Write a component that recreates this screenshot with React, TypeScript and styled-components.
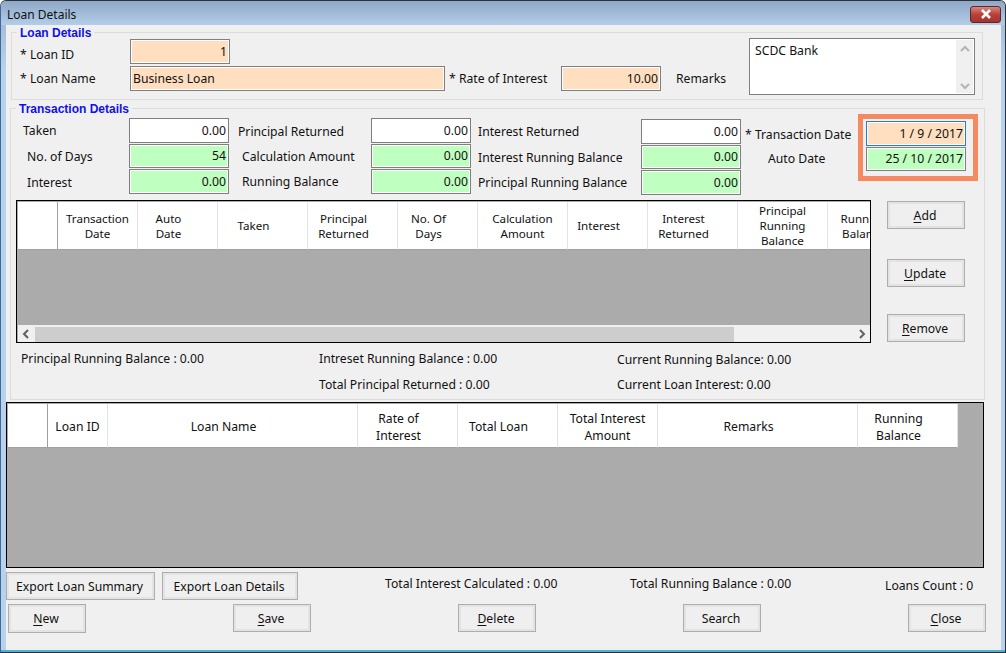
import React from "react";
import styled, { createGlobalStyle, css } from "styled-components";

const GlobalStyle = createGlobalStyle`
  html, body {
    margin: 0;
    padding: 0;
    background: #fff;
  }
  body {
    font-family: "Noto Sans", "Open Sans", sans-serif;
    font-size: 12.2px;
    color: #111;
  }
`;

const placed = css<{ $row?: number; $col?: number }>`
  ${(p) => p.$row && `grid-row: ${p.$row};`}
  ${(p) => p.$col && `grid-column: ${p.$col};`}
`;

const Window = styled.div`
  width: 1006px;
  height: 653px;
  box-sizing: border-box;
  display: flex;
  flex-direction: column;
  overflow: hidden;
  border: 1px solid #2b3138;
  border-left-color: #3c6a9c;
  border-radius: 6px 6px 0 0;
  background: linear-gradient(#9db5d2, #b9d1ea 70px);
`;

const TitleBar = styled.div`
  height: 24px;
  flex: none;
  display: flex;
  align-items: center;
  justify-content: space-between;
  padding: 0 4px 0 6px;
  background: linear-gradient(#8ea8c6, #b3cde9);
`;

const Title = styled.span`
  margin-top: 3px;
  font-size: 12px;
  color: #111;
`;

const CloseX = styled.div`
  width: 31px;
  height: 17px;
  margin-top: 2px;
  box-sizing: border-box;
  display: flex;
  align-items: center;
  justify-content: center;
  border: 1px solid #5a2a28;
  border-radius: 3px;
  background: linear-gradient(#d8877d, #b8423a 50%, #a8322c);
`;

const Client = styled.div`
  flex: 1;
  margin: 0 4px 0 5px;
  display: flex;
  flex-direction: column;
  align-items: flex-start;
  background: #f0f0f0;
`;

const BottomEdge = styled.div`
  height: 2px;
  flex: none;
  background: #4fb0d4;
`;

const Group = styled.fieldset<{ $left: number; $width: number }>`
  box-sizing: border-box;
  min-width: 0;
  margin: 0 0 0 ${(p) => p.$left}px;
  width: ${(p) => p.$width}px;
  padding: 0;
  border: 1px solid #dcdcdc;
`;

const GroupTitle = styled.legend`
  margin-left: 5px;
  padding: 0 3px;
  line-height: 14px;
  font-family: "Liberation Sans", Arial, sans-serif;
  font-size: 12px;
  font-weight: 700;
  color: #0f0fee;
  transform: translateY(1px);
`;

const LoanGrid = styled.div`
  display: grid;
  grid-template-columns: 118px 315px 116px 100px 88px 226px;
  grid-template-rows: 25px 25px;
  row-gap: 2px;
  padding: 0 0 8px 0;
  align-items: center;
`;

const Label = styled.span<{ $indent?: number; $drop?: number; $row?: number; $col?: number }>`
  ${placed}
  padding-left: ${(p) => p.$indent ?? 0}px;
  padding-top: ${(p) => p.$drop ?? 0}px;
  white-space: nowrap;
`;

const Field = styled.div<{
  $tone?: "peach" | "green" | "white";
  $focus?: boolean;
  $width?: number;
  $row?: number;
  $col?: number;
  $start?: boolean;
  $low?: boolean;
}>`
  ${placed}
  box-sizing: border-box;
  height: 100%;
  ${(p) => p.$width && `width: ${p.$width}px;`}
  display: flex;
  align-items: center;
  justify-content: ${(p) => (p.$start ? "flex-start" : "flex-end")};
  padding: 0 2px ${(p) => (p.$low ? 0 : 1)}px 2px;
  border: 1px solid ${(p) => (p.$focus ? "#1d7fd0" : "#7f7f7f")};
  box-shadow: inset 0 0 0 1px #fff;
  background: ${(p) =>
    p.$tone === "green" ? "#bfffbf" : p.$tone === "white" ? "#fff" : "#ffdfc0"};
  white-space: nowrap;
`;

const RemarksBox = styled.div`
  grid-column: 6;
  grid-row: 1 / 3;
  align-self: start;
  box-sizing: border-box;
  height: 57px;
  margin-top: -1px;
  display: flex;
  justify-content: space-between;
  border: 1px solid #7f7f7f;
  background: #fff;
  padding-left: 5px;
  line-height: 24px;
`;

const MiniScroll = styled.div`
  width: 17px;
  margin: 1px;
  display: flex;
  flex-direction: column;
  justify-content: space-between;
  align-items: center;
  padding: 5px 0 3px;
  background: #f0f0f0;
`;

const TxGroup = styled(Group)`
  margin-top: 1px;
`;

const TxTop = styled.div`
  display: flex;
  align-items: flex-start;
  padding-top: 3px;
`;

const FieldColumn = styled.div<{ $labels: number; $drop?: number }>`
  display: grid;
  grid-template-columns: ${(p) => p.$labels}px 100px;
  grid-template-rows: 25px 24px 25px;
  row-gap: 1px;
  align-items: center;
  margin-top: ${(p) => p.$drop ?? 0}px;
`;

const DateLabels = styled.div`
  width: 117px;
  margin-top: 4px;
  display: grid;
  grid-template-rows: 24px 24px;
  align-items: center;
`;

const DateHighlight = styled.div`
  margin-top: -4px;
  box-sizing: border-box;
  width: 120px;
  height: 67px;
  padding: 2px 7px 0 3px;
  border: 5px solid #f58a61;
  display: grid;
  grid-template-rows: 25px 24px;
  row-gap: 1px;
`;

const DataGrid = styled.div<{ $width: number; $height: number }>`
  box-sizing: border-box;
  width: ${(p) => p.$width}px;
  height: ${(p) => p.$height}px;
  flex: none;
  display: flex;
  flex-direction: column;
  border: 1px solid #000;
  padding-top: 1px;
  background: #ababab;
  overflow: hidden;
`;

const HeaderRow = styled.div<{ $height: number; $size: number; $leading: number }>`
  flex: none;
  height: ${(p) => p.$height}px;
  display: flex;
  margin-left: 1px;
  overflow: hidden;
  font-size: ${(p) => p.$size}px;
  line-height: ${(p) => p.$leading}px;
`;

const HeaderCell = styled.div<{ $width: number; $marker?: boolean; $shift?: boolean; $down: number }>`
  box-sizing: border-box;
  flex: none;
  width: ${(p) => p.$width}px;
  padding: ${(p) => p.$down}px ${(p) => (p.$shift ? 18 : 0)}px 0 0;
  display: flex;
  align-items: center;
  justify-content: center;
  text-align: center;
  background: #fff;
  border-right: 1px solid ${(p) => (p.$marker ? "#a0a0a0" : "#e3e3e3")};
  border-bottom: 1px solid #a0a0a0;
`;

const GridBody = styled.div`
  flex: 1;
  background: #ababab;
`;

const HScroll = styled.div`
  flex: none;
  height: 16px;
  display: flex;
  align-items: center;
  margin-left: 1px;
  border-top: 1px solid #f0f0f0;
  background: #f0f0f0;
`;

const ScrollButton = styled.div`
  width: 17px;
  height: 16px;
  flex: none;
  display: flex;
  align-items: center;
  justify-content: center;
`;

const ScrollThumb = styled.div`
  width: 699px;
  height: 15px;
  flex: none;
  background: #cdcdcd;
`;

const ScrollTrack = styled.div`
  flex: 1;
`;

const TxMiddle = styled.div`
  display: flex;
  margin: 5px 0 0 5px;
`;

const SideButtons = styled.div`
  display: flex;
  flex-direction: column;
  margin: 1px 0 0 16px;
`;

const Button = styled.button<{ $width?: number; $top?: number; $left?: number; $tall?: boolean }>`
  box-sizing: border-box;
  width: ${(p) => p.$width ?? 78}px;
  height: ${(p) => (p.$tall ? 29 : 28)}px;
  flex: none;
  margin: ${(p) => p.$top ?? 0}px 0 0 ${(p) => p.$left ?? 0}px;
  padding: 0 2px 0 0;
  font: inherit;
  color: #111;
  background: #efefef;
  border: 1px solid #adadad;
  box-shadow: inset 0 0 0 2px #e3e3e3;

  u {
    text-underline-offset: 2px;
  }
`;

const Summary = styled.div`
  display: grid;
  grid-template-columns: 298px 298px 298px;
  grid-auto-rows: 14px;
  row-gap: 12px;
  margin: 9px 0 7px 10px;
  line-height: 14px;
`;

const SummaryDrop = styled.span`
  padding-top: 1px;
`;

const MainGrid = styled(DataGrid)`
  margin: 2px 0 0 0;
`;

const FooterInfo = styled.div`
  display: flex;
  align-items: center;
  margin: 4px 0 0 0;
`;

const InfoText = styled.span<{ $width: number; $drop?: number; $left?: number }>`
  flex: none;
  width: ${(p) => p.$width}px;
  white-space: nowrap;
  padding-top: ${(p) => p.$drop ?? 0}px;
  margin: -6px 0 0 ${(p) => p.$left ?? 0}px;
`;

const FooterButtons = styled.div`
  display: flex;
  align-items: flex-start;
  gap: 147px;
  margin: 4px 0 0 2px;
`;

type Column = { width: number; lines?: string[]; marker?: boolean; shift?: boolean };

const txColumns: Column[] = [
  { width: 40, marker: true },
  { width: 80, lines: ["Transaction", "Date"] },
  { width: 80, lines: ["Auto", "Date"], shift: true },
  { width: 90, lines: ["Taken"], shift: true },
  { width: 90, lines: ["Principal", "Returned"], shift: true },
  { width: 80, lines: ["No. Of", "Days"], shift: true },
  { width: 90, lines: ["Calculation", "Amount"] },
  { width: 80, lines: ["Interest"], shift: true },
  { width: 90, lines: ["Interest", "Returned"], shift: true },
  { width: 90, lines: ["Principal", "Running", "Balance"] },
  { width: 90, lines: ["Running", "Balance"], shift: true },
];

const loanColumns: Column[] = [
  { width: 40, marker: true },
  { width: 60, lines: ["Loan ID"] },
  { width: 250, lines: ["Loan Name"], shift: true },
  { width: 100, lines: ["Rate of", "Interest"], shift: true },
  { width: 100, lines: ["Total Loan"], shift: true },
  { width: 100, lines: ["Total Interest", "Amount"] },
  { width: 200, lines: ["Remarks"], shift: true },
  { width: 100, lines: ["Running", "Balance"], shift: true },
];

const Header = ({ columns, height, size, leading, down = 0 }: { columns: Column[]; height: number; size: number; leading: number; down?: number }) => (
  <HeaderRow $height={height} $size={size} $leading={leading}>
    {columns.map((col, i) => (
      <HeaderCell key={i} $width={col.width} $marker={col.marker} $shift={col.shift} $down={down}>
        <div>
          {(col.lines || []).map((line) => (
            <div key={line}>{line}</div>
          ))}
        </div>
      </HeaderCell>
    ))}
  </HeaderRow>
);

const Chevron = ({ dir, color = "#606060" }: { dir: "up" | "down" | "left" | "right"; color?: string }) => {
  const paths = {
    up: "M1 6 L5 2 L9 6",
    down: "M1 2 L5 6 L9 2",
    left: "M6 1 L2 5 L6 9",
    right: "M3 1 L7 5 L3 9",
  };
  const upright = dir === "up" || dir === "down";
  return (
    <svg width="10" height={upright ? 8 : 10} viewBox={upright ? "0 0 10 8" : "0 0 10 10"}>
      <path d={paths[dir]} fill="none" stroke={color} strokeWidth="2" />
    </svg>
  );
};

const App = () => (
  <>
    <GlobalStyle />
    <Window>
      <TitleBar>
        <Title>Loan Details</Title>
        <CloseX>
          <svg width="12" height="10" viewBox="0 0 12 10">
            <path d="M2 1 L10 9 M10 1 L2 9" stroke="#fff" strokeWidth="2.6" />
          </svg>
        </CloseX>
      </TitleBar>
      <Client>
        <Group $left={5} $width={972}>
          <GroupTitle>Loan Details</GroupTitle>
          <LoanGrid>
            <Label $indent={8} $drop={5}>* Loan ID</Label>
            <Field $tone="peach" $width={100}>1</Field>
            <Label $indent={8} $row={2} $col={1}>* Loan Name</Label>
            <Field $tone="peach" $start $low $row={2} $col={2}>Business Loan</Field>
            <Label $indent={4} $row={2} $col={3}>* Rate of Interest</Label>
            <Field $tone="peach" $low $row={2} $col={4}>10.00</Field>
            <Label $indent={15} $row={2} $col={5}>Remarks</Label>
            <RemarksBox>
              SCDC Bank
              <MiniScroll>
                <Chevron dir="up" color="#b4b4b4" />
                <Chevron dir="down" color="#b4b4b4" />
              </MiniScroll>
            </RemarksBox>
          </LoanGrid>
        </Group>
        <TxGroup $left={4} $width={975}>
          <GroupTitle>Transaction Details</GroupTitle>
          <TxTop>
            <FieldColumn $labels={118}>
              <Label $indent={12}>Taken</Label>
              <Field $tone="white">0.00</Field>
              <Label $indent={16} $drop={1}>No. of Days</Label>
              <Field $tone="green">54</Field>
              <Label $indent={16} $drop={2}>Interest</Label>
              <Field $tone="green">0.00</Field>
            </FieldColumn>
            <FieldColumn $labels={142}>
              <Label $indent={9} $drop={2}>Principal Returned</Label>
              <Field $tone="white">0.00</Field>
              <Label $indent={13}>Calculation Amount</Label>
              <Field $tone="green">0.00</Field>
              <Label $indent={13}>Running Balance</Label>
              <Field $tone="green">0.00</Field>
            </FieldColumn>
            <FieldColumn $labels={170} $drop={1}>
              <Label $indent={7}>Interest Returned</Label>
              <Field $tone="white">0.00</Field>
              <Label $indent={7}>Interest Running Balance</Label>
              <Field $tone="green">0.00</Field>
              <Label $indent={7}>Principal Running Balance</Label>
              <Field $tone="green">0.00</Field>
            </FieldColumn>
            <DateLabels>
              <Label $indent={4}>* Transaction Date</Label>
              <Label $indent={27}>Auto Date</Label>
            </DateLabels>
            <DateHighlight>
              <Field $tone="peach" $focus>1 / 9 / 2017</Field>
              <Field $tone="green">25 / 10 / 2017</Field>
            </DateHighlight>
          </TxTop>
          <TxMiddle>
            <DataGrid $width={855} $height={143}>
              <Header columns={txColumns} height={48} size={11.6} leading={15} />
              <GridBody />
              <HScroll>
                <ScrollButton><Chevron dir="left" /></ScrollButton>
                <ScrollThumb />
                <ScrollTrack />
                <ScrollButton><Chevron dir="right" /></ScrollButton>
              </HScroll>
            </DataGrid>
            <SideButtons>
              <Button><u>A</u>dd</Button>
              <Button $top={30}><u>U</u>pdate</Button>
              <Button $top={27}><u>R</u>emove</Button>
            </SideButtons>
          </TxMiddle>
          <Summary>
            <span>Principal Running Balance : 0.00</span>
            <span>Intreset Running Balance : 0.00</span>
            <SummaryDrop>Current Running Balance: 0.00</SummaryDrop>
            <span />
            <span>Total Principal Returned : 0.00</span>
            <span>Current Loan Interest: 0.00</span>
          </Summary>
        </TxGroup>
        <MainGrid $width={978} $height={166}>
          <Header columns={loanColumns} height={44} size={12.2} leading={17} down={2} />
          <GridBody />
        </MainGrid>
        <FooterInfo>
          <Button $width={149}>Export Loan Summary</Button>
          <Button $width={136} $left={7}>Export Loan Details</Button>
          <InfoText $width={245} $left={87}>Total Interest Calculated : 0.00</InfoText>
          <InfoText $width={255}>Total Running Balance : 0.00</InfoText>
          <InfoText $width={90} $drop={4}>Loans Count : 0</InfoText>
        </FooterInfo>
        <FooterButtons>
          <Button $tall><u>N</u>ew</Button>
          <Button><u>S</u>ave</Button>
          <Button><u>D</u>elete</Button>
          <Button>Search</Button>
          <Button><u>C</u>lose</Button>
        </FooterButtons>
      </Client>
      <BottomEdge />
    </Window>
  </>
);

export default App;
